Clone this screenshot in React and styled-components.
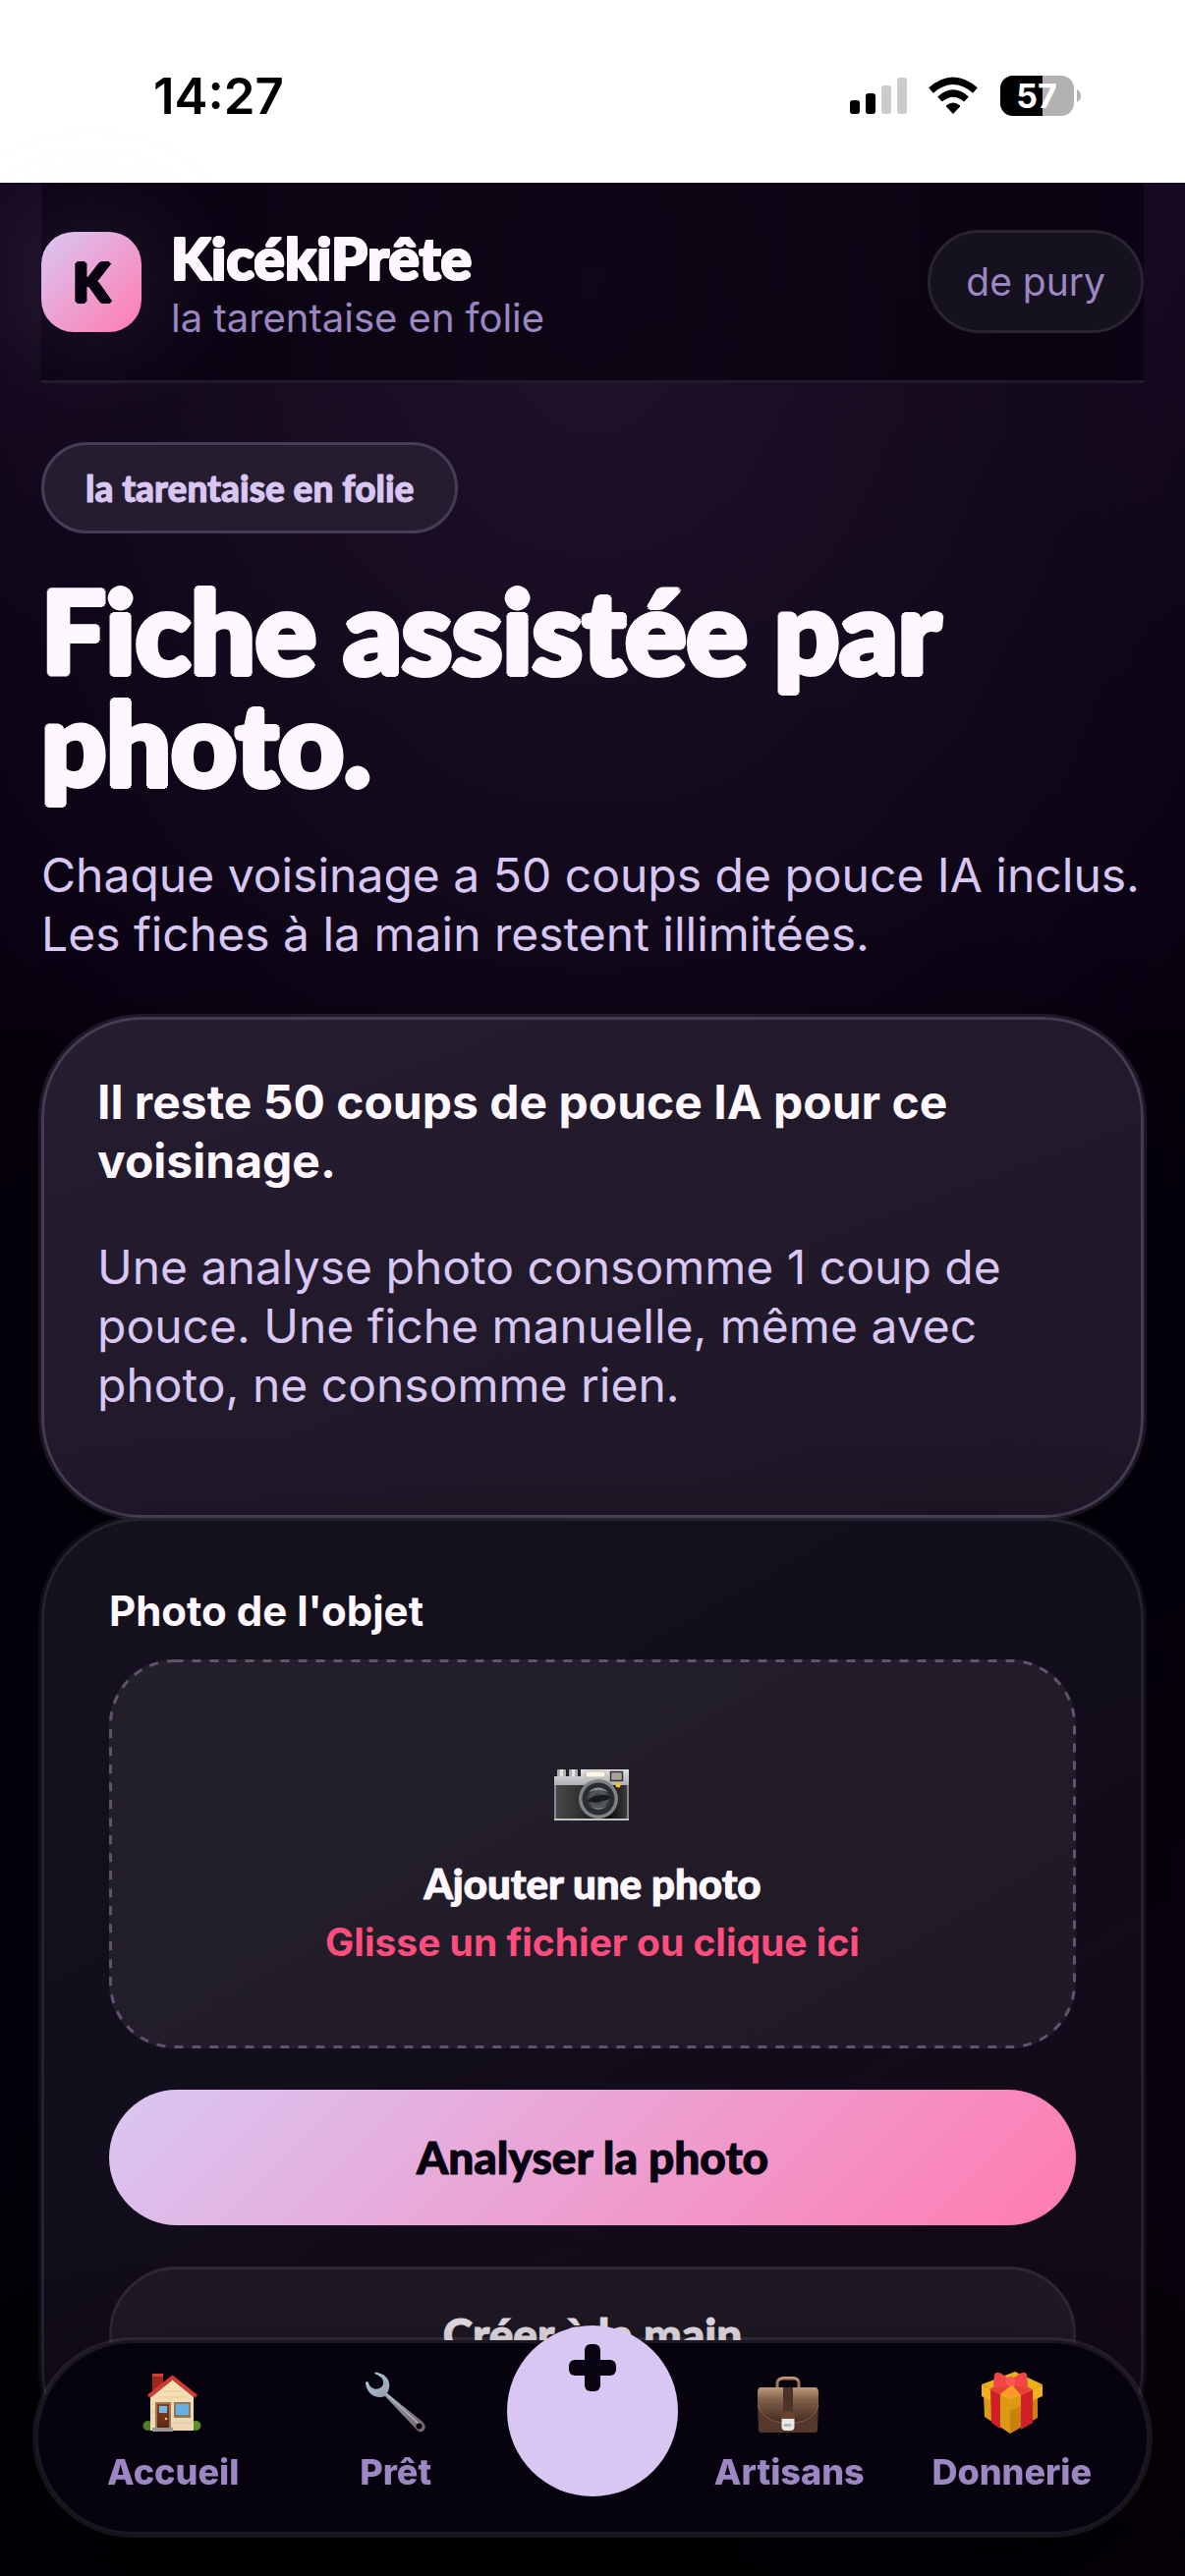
import React from 'react';
import styled, { createGlobalStyle, css } from 'styled-components';

const body = "Inter, 'Liberation Sans', sans-serif";
const display = "Lato, 'Open Sans', sans-serif";

/* Thickens the display face and softens its corners. */
const plump = (r, d) => css`
  text-shadow:
    ${r}px 0, -${r}px 0, 0 ${r}px, 0 -${r}px,
    ${d}px ${d}px, -${d}px ${d}px, ${d}px -${d}px, -${d}px -${d}px;
`;

const GlobalStyle = createGlobalStyle`
  *, *::before, *::after { box-sizing: border-box; }
  body {
    margin: 0;
    background: #040009;
    color: #fff7ff;
    font-family: ${body};
  }
  h1, h2, p { margin: 0; }
  button { font: inherit; cursor: pointer; }
  a { color: inherit; text-decoration: none; }
`;

const Screen = styled.div`
  display: flex;
  flex-direction: column;
  min-height: 100vh;
`;

const StatusBar = styled.div`
  display: flex;
  align-items: center;
  justify-content: space-between;
  height: 186px;
  padding: 10px 105px 0 156px;
  background: #fff;
  color: #000;
`;

const Clock = styled.time`
  font-size: 51px;
  font-weight: 600;
  line-height: 60px;
`;

const StatusIcons = styled.svg`
  display: block;
  width: 236px;
  height: 42px;
`;

const Page = styled.main`
  flex: 1;
  padding: 0 42px 108px;
  background:
    radial-gradient(ellipse 160px 500px at 0 0, rgba(62, 28, 92, 0.12), transparent),
    radial-gradient(ellipse 160px 500px at 100% 0, rgba(62, 28, 92, 0.12), transparent),
    radial-gradient(ellipse 760px 1150px at 50% 100px, rgba(190, 150, 225, 0.1), transparent),
    radial-gradient(ellipse 620px 700px at 100% 2000px, rgba(255, 77, 160, 0.03), transparent),
    linear-gradient(#0e0416, #0a0212 700px, #04000c 1100px, #04000c 1900px, #030006);
`;

const Header = styled.header`
  display: flex;
  align-items: center;
  gap: 30px;
  padding: 39px 0;
  border-bottom: 3px solid #201a2b;
  background: rgba(6, 2, 14, 0.68);
`;

const Logo = styled.div`
  display: grid;
  place-items: center;
  width: 102px;
  height: 102px;
  border-radius: 33px;
  background: linear-gradient(135deg, #d9c7f3, #ff7bb0);
  box-shadow: 0 0 120px rgba(217, 199, 243, 0.2);
  color: #080311;
  font: 900 54px/60px ${display};
  ${plump(2, 1)}
`;

const Brand = styled.div`
  flex: 1;
`;

const BrandName = styled.p`
  font: 900 59px/75px ${display};
  ${plump(1, 1)}
`;

const BrandPlace = styled.p`
  color: #9c87c3;
  font-size: 40px;
  line-height: 48px;
`;

const UserButton = styled.button`
  height: 105px;
  padding: 0 36px;
  border: 3px solid #282431;
  border-radius: 53px;
  background: #15111e;
  color: #9c87c3;
  font-size: 39px;
`;

const Tag = styled.p`
  width: fit-content;
  margin-top: 60px;
  padding: 0 42px;
  border: 3px solid #463c55;
  border-radius: 47px;
  background: #261c30;
  color: #d9c7f3;
  font: 900 37px/87px ${display};
  -webkit-text-stroke: 1px;
`;

const Title = styled.h1`
  margin-top: 42px;
  font: 900 116px/114px ${display};
  ${plump(3, 2)}
`;

const Text = styled.p`
  color: #d9c7f3;
  font-size: 48px;
  line-height: 60px;
`;

const Lead = styled(Text)`
  margin: 48px 0 54px;
`;

const Card = styled.section`
  border: 3px solid;
  border-radius: 102px;
`;

const QuotaCard = styled(Card)`
  padding: 54px 54px 102px;
  border-color: #453b53;
  background: linear-gradient(160deg, #251d30, #1e1726);
  box-shadow: 0 0 0 3px rgba(255, 220, 255, 0.1), 0 30px 90px rgba(0, 0, 0, 0.5);
`;

const QuotaTitle = styled.h2`
  margin-bottom: 48px;
  font-size: 48px;
  font-weight: 700;
  line-height: 60px;
`;

const FormCard = styled(Card).attrs({ as: 'form' })`
  display: flex;
  flex-direction: column;
  gap: 42px;
  padding: 66px;
  border-color: #25212e;
  background: linear-gradient(150deg, #15121e, #120e1b 40%, #130818);
  box-shadow: 0 0 0 3px rgba(255, 255, 255, 0.05), 0 30px 90px rgba(0, 0, 0, 0.5);
`;

const Field = styled.div`
  display: flex;
  flex-direction: column;
  gap: 24px;
`;

const Label = styled.label`
  font-size: 42px;
  font-weight: 700;
  line-height: 51px;
`;

const DropZone = styled.button`
  position: relative;
  display: flex;
  flex-direction: column;
  align-items: center;
  justify-content: center;
  height: 396px;
  padding: 33px 0 0;
  border: 0;
  border-radius: 66px;
  background: linear-gradient(150deg, #23202c, #201926);
  color: #fff7ff;
`;

const DashedOutline = styled.svg`
  position: absolute;
  inset: 0;
  width: 100%;
  height: 100%;
  overflow: visible;

  rect {
    width: calc(100% - 3px);
    height: calc(100% - 3px);
    fill: none;
    stroke: #5f546f;
    stroke-width: 3px;
    stroke-dasharray: 9 9;
  }
`;

const CameraIcon = styled.svg`
  width: 78px;
  height: 54px;
  margin-bottom: 33px;
`;

const DropTitle = styled.span`
  font: 900 42px/60px ${display};
  -webkit-text-stroke: 1px;
`;

const DropHint = styled.span`
  color: #ff4d7d;
  font-size: 39px;
  font-weight: 700;
  line-height: 60px;
`;

const Action = styled.button`
  height: 138px;
  padding: 0;
  border: ${(p) => (p.$primary ? '0' : '3px solid #2e2837')};
  border-radius: 69px;
  background: ${(p) => (p.$primary ? 'linear-gradient(135deg, #d9c7f3, #ff7bb0)' : '#1f1925')};
  color: ${(p) => (p.$primary ? '#080311' : '#efe7ef')};
  && {
    font: 900 46px/60px ${display};
  }
  -webkit-text-stroke: 1px;
`;

const TabBar = styled.nav`
  position: fixed;
  right: 36px;
  bottom: 42px;
  left: 36px;
  display: grid;
  grid-template-columns: 1fr 1fr 174px 1fr 1fr;
  height: 198px;
  padding: 0 24px;
  border: 3px solid #1a1623;
  border-radius: 99px;
  background: #06020e;
  box-shadow: 0 0 0 3px rgba(255, 255, 255, 0.08), 0 30px 90px rgba(0, 0, 0, 0.6);
`;

const Tab = styled.a`
  display: flex;
  flex-direction: column;
  align-items: center;
  gap: 14px;
  padding-top: 27px;
  color: #9c87c3;
  font-size: 36px;
  font-weight: 800;
  line-height: 48px;
`;

const TabIcon = styled.svg`
  width: 66px;
  height: 66px;
`;

const AddButton = styled.button`
  display: flex;
  justify-content: center;
  width: 174px;
  height: 174px;
  margin-top: -18px;
  padding: 19px 0 0;
  border: 0;
  border-radius: 50%;
  background: #d9c7f3;
`;

const PlusIcon = styled.svg`
  width: 48px;
  height: 48px;
`;

const Status = () => (
  <StatusIcons viewBox="0 0 236 42" role="img" aria-label="Réseau, Wi-Fi, batterie">
    <rect x="0" y="25" width="10" height="14" rx="3" />
    <rect x="16" y="18" width="10" height="21" rx="3" />
    <rect x="32" y="10" width="10" height="29" rx="3" fill="#cbcbcb" />
    <rect x="48" y="2" width="10" height="37" rx="3" fill="#cbcbcb" />
    <path d="M105 38.500 L98 31 Q105 25 112 31Z" stroke="#000" strokeWidth="1" strokeLinejoin="round" />
    <path d="M91.500 24 Q105 12 118.500 24" fill="none" stroke="#000" strokeWidth="7" />
    <path d="M82.500 15 Q105 -4.500 127.500 15" fill="none" stroke="#000" strokeWidth="7" />
    <clipPath id="battery"><rect x="153" y="0" width="75" height="41" rx="13" /></clipPath>
    <g clipPath="url(#battery)">
      <rect x="153" width="75" height="41" fill="#b2b2b2" />
      <rect x="153" width="43" height="41" />
    </g>
    <path d="M231 14 Q235 16 235 20.500 Q235 25 231 27Z" fill="#b2b2b2" />
    <text x="190" y="33" textAnchor="middle" fill="#fff" fontFamily={body} fontWeight="700" fontSize="34">57</text>
  </StatusIcons>
);

const Camera = () => (
  <CameraIcon viewBox="0 0 78 54" aria-hidden="true">
    <defs>
      <linearGradient id="metal" x2="0" y2="1"><stop stopColor="#e0e1e3" /><stop offset="1" stopColor="#aeb0b3" /></linearGradient>
      <linearGradient id="leather"><stop stopColor="#4a4a4a" /><stop offset=".35" stopColor="#303030" /><stop offset=".7" stopColor="#050505" /><stop offset="1" stopColor="#404040" /></linearGradient>
      <radialGradient id="glass"><stop stopColor="#24282c" /><stop offset=".6" stopColor="#555b60" /><stop offset="1" stopColor="#25282c" /></radialGradient>
    </defs>
    <g transform="translate(-1 0)">
      <path d="M4 2q0-1 1-1h7q1 0 1 1v7H4zM16 2q0-1 1-1h7q1 0 1 1v7h-9z" fill="#aeb0b2" />
      <path d="M7 1h3v7H7zM19 1h3v7h-3z" fill="#e5e5e5" />
      <path d="M1 8h27V1h49v16H1z" fill="url(#metal)" />
      <path d="M1 17h76v35H1z" fill="url(#leather)" />
      <path d="M1 17h2v35H1zM75 17h2v35h-2z" fill="#86888a" />
      <path d="M1 51h76v2H1z" fill="#c4c4c4" />
      <rect x="33" y="3" width="20" height="6" rx="2" fill="#fff8e8" stroke="#aaa69d" strokeWidth=".7" />
      <rect x="58.500" y="3.500" width="12" height="9" fill="#aaa19b" stroke="#333" strokeWidth="1.500" />
      <circle cx="66" cy="17" r="2.500" fill="#f7c52d" />
      <circle cx="46" cy="31" r="20" fill="#7f8285" />
      <circle cx="46" cy="31" r="16.500" fill="#2a2c2f" />
      <circle cx="46" cy="31" r="13" fill="url(#glass)" />
      <path d="M34 33q7-6 12-5 7-3 12 1-2 4-9 4-7 3-15 0z" fill="#17191b" />
      <path d="M36 24q10-9 20 0-10-4-20 0M38 38q9 5 16 0-7 7-16 0" fill="#8b9398" />
    </g>
  </CameraIcon>
);

const House = () => (
  <TabIcon viewBox="0 0 66 66" aria-hidden="true">
    <defs>
      <linearGradient id="wall" x2="0" y2="1"><stop stopColor="#fae2b5" /><stop offset="1" stopColor="#ebd5b0" /></linearGradient>
      <linearGradient id="door" x2="0" y2="1"><stop stopColor="#844026" /><stop offset="1" stopColor="#592514" /></linearGradient>
    </defs>
    <path d="M12 4h11v14L12 25z" fill="#9d261f" /><path d="M12 4h11v3H12z" fill="#cf4137" />
    <circle cx="7.500" cy="57" r="5" fill="#4f7c28" /><circle cx="56.500" cy="57" r="5" fill="#5c8e2c" />
    <path d="M10 25 32 8l22 17v37H10z" fill="url(#wall)" />
    <path d="M23 22h19M19 28h27M11 35h42M11 42h4M11 49h4M34 54h20" stroke="#dcc394" strokeWidth=".7" />
    <path d="M8 27 32.500 7.500l24.500 19.500" fill="none" stroke="#d63831" strokeWidth="3.500" strokeLinejoin="round" />
    <path d="M9 29 32.500 10l23.500 19" fill="none" stroke="#8e231d" strokeWidth="1" />
    <path d="M15 33h16v27H15z" fill="#9c7556" /><path d="M17 35h12v25H17z" fill="url(#door)" />
    <path d="M19 37h8v7h-8z" fill="#72b9e5" /><circle cx="26" cy="50" r="1.300" fill="#ffc33d" />
    <path d="M34 33h17v16H34z" fill="#8d785c" /><path d="M36 35h13v11H36z" fill="#66afe0" />
    <path d="M12 59h21v4H12z" fill="#9c9891" />
  </TabIcon>
);

const Wrench = () => (
  <TabIcon viewBox="0 0 66 66" aria-hidden="true">
    <defs><linearGradient id="steel" x2="1" y2="1"><stop stopColor="#b6c9d9" /><stop offset=".45" stopColor="#8d99a5" /><stop offset="1" stopColor="#765f64" /></linearGradient></defs>
    <path d="M12 2.500C24 4 29 13 25 22l-1 2 36 29c7 7-1 14-6 8L22 27c-9 3-18-1-20-13 0-2 2-3 3-1 2 8 10 8 14 4 3-5 0-10-6-12-2-1-2-2-1-2.500z" fill="url(#steel)" />
    <path d="m24 25 32 30" stroke="#bdcbd6" strokeWidth="1.500" opacity=".7" />
    <circle cx="56.500" cy="57.500" r="3" fill="#080310" />
  </TabIcon>
);

const Briefcase = () => (
  <TabIcon viewBox="0 0 66 66" aria-hidden="true">
    <defs><linearGradient id="case" x2="0" y2="1"><stop stopColor="#bd9a7c" /><stop offset=".35" stopColor="#806048" /><stop offset="1" stopColor="#43291f" /></linearGradient></defs>
    <path d="M21 19v-5q0-5 5-5h12q5 0 5 5v5" fill="none" stroke="#a17458" strokeWidth="3" />
    <path d="M23 11q1-3 5-3h9q4 0 5 3" fill="none" stroke="#c09a7e" strokeWidth="2" />
    <path d="M3 18q-2 1-2 6v13l1 24q0 3 3 3h54q3 0 3-3l1-24V24q0-5-4-6z" fill="#53382b" />
    <path d="M5 18h54q4 0 4 5v13q-4 16-24 18H25Q5 52 1 36V23q0-5 4-5z" fill="url(#case)" />
    <path d="M1 36q5 15 24 18h14q20-2 24-18" fill="none" stroke="#8e6b56" strokeWidth=".8" />
    <path d="M27 18h10v26H27z" fill="#4b3327" /><path d="M25 45q7-6 14 0v6H25z" fill="#694330" />
    <path d="M25.500 50h13v8q0 4-4 4h-5q-4 0-4-4z" fill="#e8e8e9" /><path d="M28 58v-3h7v3z" fill="#b5b5b7" />
  </TabIcon>
);

const Gift = () => (
  <TabIcon viewBox="0 0 66 66" aria-hidden="true">
    <path d="M4 27 32 12l27 15v21L31 65 5 48z" fill="#dc9914" />
    <path d="M31 36v29l28-16V26z" fill="#ca820f" />
    <path d="M2 15 36 2l28 13-33 16z" fill="#e7b01c" />
    <path d="M2 15 31 30v11L2 27zM64 15 31 30v11l33-14z" fill="#f1b31b" />
    <path d="m20 25 11 5v11l-11-5zM42 26 31 30v11l11-4z" fill="#dc9a12" />
    <path d="m11 20 10 5v35l-9-6zM42 26l12-6v34l-12 7z" fill="#cf2029" />
    <path d="m10 20 13-8 9 4-11 9zM53 20 42 13l-8 4 8 9z" fill="#e64134" />
    <path d="m23 24 9-6 9 6-9 5z" fill="#ff9828" />
    <path d="M29 9C23 4 17 0 15 5l-1 10c0 6 11 2 16 0z" fill="#f34446" /><path d="M34 9c6-5 12-9 14-4l1 10c0 6-11 2-16 0z" fill="#f34446" />
    <circle cx="31.500" cy="12" r="5" fill="#ff5650" />
  </TabIcon>
);

const tabs = [
  { label: 'Accueil', Icon: House },
  { label: 'Prêt', Icon: Wrench },
  null,
  { label: 'Artisans', Icon: Briefcase },
  { label: 'Donnerie', Icon: Gift },
];

export default function App() {
  return (
    <Screen>
      <GlobalStyle />
      <StatusBar>
        <Clock>14:27</Clock>
        <Status />
      </StatusBar>
      <Page>
        <Header>
          <Logo>K</Logo>
          <Brand>
            <BrandName>KicékiPrête</BrandName>
            <BrandPlace>la tarentaise en folie</BrandPlace>
          </Brand>
          <UserButton type="button">de pury</UserButton>
        </Header>
        <Tag>la tarentaise en folie</Tag>
        <Title>Fiche assistée par photo.</Title>
        <Lead>Chaque voisinage a 50 coups de pouce IA inclus. Les fiches à la main restent illimitées.</Lead>
        <QuotaCard>
          <QuotaTitle>Il reste 50 coups de pouce IA pour ce voisinage.</QuotaTitle>
          <Text>Une analyse photo consomme 1 coup de pouce. Une fiche manuelle, même avec photo, ne consomme rien.</Text>
        </QuotaCard>
        <FormCard>
          <Field>
            <Label htmlFor="photo">Photo de l'objet</Label>
            <DropZone id="photo" type="button">
              <DashedOutline aria-hidden="true">
                <rect x="1.5" y="1.5" rx="65" />
              </DashedOutline>
              <Camera />
              <DropTitle>Ajouter une photo</DropTitle>
              <DropHint>Glisse un fichier ou clique ici</DropHint>
            </DropZone>
          </Field>
          <Action type="button" $primary>Analyser la photo</Action>
          <Action type="button">Créer à la main</Action>
        </FormCard>
      </Page>
      <TabBar>
        {tabs.map((tab) =>
          tab ? (
            <Tab href="#" key={tab.label}>
              <tab.Icon />
              {tab.label}
            </Tab>
          ) : (
            <AddButton type="button" aria-label="Ajouter" key="add">
              <PlusIcon viewBox="0 0 48 48" aria-hidden="true">
                <rect x="16" y="0" width="16" height="48" rx="6" fill="#080311" />
                <rect x="0" y="16" width="48" height="16" rx="6" fill="#080311" />
              </PlusIcon>
            </AddButton>
          ),
        )}
      </TabBar>
    </Screen>
  );
}
